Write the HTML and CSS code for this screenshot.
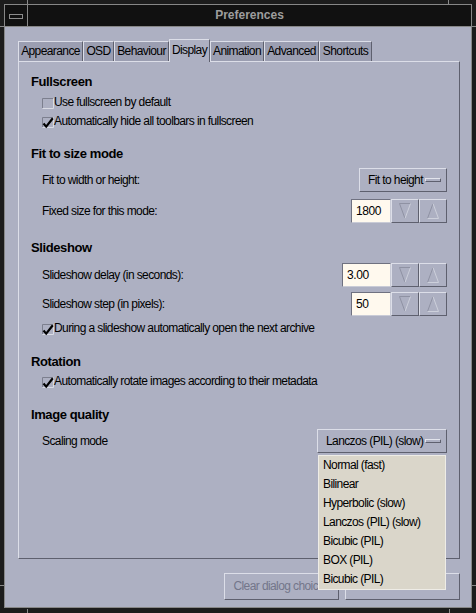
FILE: index.html
```html
<!DOCTYPE html>
<html>
<head>
<meta charset="utf-8">
<title>Preferences</title>
<link rel="stylesheet" href="styles.css">
</head>
<body>
<div class="window">
  <div class="titlebar">
    <div class="menu-btn"><span class="menu-glyph"></span></div>
    <div class="title">Preferences</div>
  </div>
  <div class="content">
    <div class="notebook">
      <div class="tabs">
        <div class="tab t-appearance">Appearance</div>
        <div class="tab t-osd">OSD</div>
        <div class="tab t-behaviour">Behaviour</div>
        <div class="tab t-display active">Display</div>
        <div class="tab t-animation">Animation</div>
        <div class="tab t-advanced">Advanced</div>
        <div class="tab t-shortcuts">Shortcuts</div>
      </div>
      <div class="panel">
        <div class="heading">Fullscreen</div>
        <div class="check-row mt2">
          <svg class="cb" width="12" height="12" viewBox="0 0 12 12"><path d="M0.5 10V0.5H11" fill="none" stroke="#7c7f8e"/><path d="M11.5 0.5V10.5H0.5" fill="none" stroke="#d9dbe4"/></svg>
          <span>Use fullscreen by default</span>
        </div>
        <div class="check-row">
          <svg class="cb" width="12" height="12" viewBox="0 0 12 12"><path d="M0.5 10V0.5H11" fill="none" stroke="#7c7f8e"/><path d="M11.5 0.5V10.5H0.5" fill="none" stroke="#d9dbe4"/><path d="M1.5 6.5L4.2 9.6L10.8 1.2" fill="none" stroke="#000" stroke-width="2.2"/></svg>
          <span>Automatically hide all toolbars in fullscreen</span>
        </div>

        <div class="heading mt14">Fit to size mode</div>
        <div class="ctl-row mt5">
          <span>Fit to width or height:</span>
          <div class="optmenu w-fit"><span>Fit to height</span><span class="ind"></span></div>
        </div>
        <div class="ctl-row mt7">
          <span>Fixed size for this mode:</span>
          <div class="spin">
            <div class="entry w40">1800</div>
            <div class="arrow"><svg width="14" height="18" viewBox="0 0 14 18"><path d="M1.5 1.5H12.5" stroke="#8f92a3" fill="none"/><path d="M1.5 1.5L7 16.5" stroke="#8f92a3" fill="none"/><path d="M12.5 1.5L7 16.5" stroke="#cdd0db" fill="none"/></svg></div>
            <div class="arrow"><svg width="14" height="18" viewBox="0 0 14 18"><path d="M7 1.5L1.5 16.5" stroke="#8f92a3" fill="none"/><path d="M7 1.5L12.5 16.5M1.5 16.5H12.5" stroke="#cdd0db" fill="none"/></svg></div>
          </div>
        </div>

        <div class="heading mt16">Slideshow</div>
        <div class="ctl-row mt6">
          <span>Slideshow delay (in seconds):</span>
          <div class="spin">
            <div class="entry w49">3.00</div>
            <div class="arrow"><svg width="14" height="18" viewBox="0 0 14 18"><path d="M1.5 1.5H12.5" stroke="#8f92a3" fill="none"/><path d="M1.5 1.5L7 16.5" stroke="#8f92a3" fill="none"/><path d="M12.5 1.5L7 16.5" stroke="#cdd0db" fill="none"/></svg></div>
            <div class="arrow"><svg width="14" height="18" viewBox="0 0 14 18"><path d="M7 1.5L1.5 16.5" stroke="#8f92a3" fill="none"/><path d="M7 1.5L12.5 16.5M1.5 16.5H12.5" stroke="#cdd0db" fill="none"/></svg></div>
          </div>
        </div>
        <div class="ctl-row mt5">
          <span>Slideshow step (in pixels):</span>
          <div class="spin">
            <div class="entry w40">50</div>
            <div class="arrow"><svg width="14" height="18" viewBox="0 0 14 18"><path d="M1.5 1.5H12.5" stroke="#8f92a3" fill="none"/><path d="M1.5 1.5L7 16.5" stroke="#8f92a3" fill="none"/><path d="M12.5 1.5L7 16.5" stroke="#cdd0db" fill="none"/></svg></div>
            <div class="arrow"><svg width="14" height="18" viewBox="0 0 14 18"><path d="M7 1.5L1.5 16.5" stroke="#8f92a3" fill="none"/><path d="M7 1.5L12.5 16.5M1.5 16.5H12.5" stroke="#cdd0db" fill="none"/></svg></div>
          </div>
        </div>
        <div class="check-row mt3">
          <svg class="cb" width="12" height="12" viewBox="0 0 12 12"><path d="M0.5 10V0.5H11" fill="none" stroke="#7c7f8e"/><path d="M11.5 0.5V10.5H0.5" fill="none" stroke="#d9dbe4"/><path d="M1.5 6.5L4.2 9.6L10.8 1.2" fill="none" stroke="#000" stroke-width="2.2"/></svg>
          <span>During a slideshow automatically open the next archive</span>
        </div>

        <div class="heading mt15">Rotation</div>
        <div class="check-row mt1">
          <svg class="cb" width="12" height="12" viewBox="0 0 12 12"><path d="M0.5 10V0.5H11" fill="none" stroke="#7c7f8e"/><path d="M11.5 0.5V10.5H0.5" fill="none" stroke="#d9dbe4"/><path d="M1.5 6.5L4.2 9.6L10.8 1.2" fill="none" stroke="#000" stroke-width="2.2"/></svg>
          <span>Automatically rotate images according to their metadata</span>
        </div>

        <div class="heading mt15">Image quality</div>
        <div class="ctl-row mt5">
          <span>Scaling mode</span>
          <div class="optmenu w-scale"><span>Lanczos (PIL) (slow)</span><span class="ind"></span></div>
        </div>
      </div>
    </div>
    <div class="buttons">
      <div class="btn insensitive">Clear dialog choices</div>
      <div class="btn">Close</div>
    </div>
    <div class="popup">
      <div class="item">Normal (fast)</div>
      <div class="item">Bilinear</div>
      <div class="item">Hyperbolic (slow)</div>
      <div class="item">Lanczos (PIL) (slow)</div>
      <div class="item">Bicubic (PIL)</div>
      <div class="item">BOX (PIL)</div>
      <div class="item">Bicubic (PIL)</div>
    </div>
  </div>
</div>
<span class="tick tv t-top-l"></span>
<span class="tick tv t-top-r"></span>
<span class="tick tv t-bot-l"></span>
<span class="tick tv t-bot-r"></span>
<span class="tick th t-left-t"></span>
<span class="tick th t-left-b"></span>
<span class="tick th t-right-t"></span>
<span class="tick th t-right-b"></span>
</body>
</html>
```

FILE: styles.css
```css
* { box-sizing: border-box; }
html, body { margin: 0; padding: 0; }
body {
  width: 476px;
  height: 613px;
  background: #1c1c1c;
  font-family: "Liberation Sans", Arial, sans-serif;
  font-size: 12px;
  color: #000;
  overflow: hidden;
  position: relative;
}
.window {
  margin: 4px 4px 5px 4px;
  height: 604px;
  border: 1px solid #878787;
  display: flex;
  flex-direction: column;
}
.titlebar {
  height: 22px;
  background: #111;
  border-bottom: 1px solid #878787;
  display: flex;
}
.menu-btn {
  width: 23px;
  border-right: 1px solid #878787;
  display: flex;
  align-items: center;
  justify-content: center;
}
.menu-glyph {
  width: 14px;
  height: 5px;
  border: 1px solid #8c8c8c;
  margin-top: 1px;
}
.title {
  flex: 1;
  text-align: center;
  font-weight: bold;
  color: #9d9d9d;
  line-height: 21px;
}
.content {
  flex: 1;
  background: #adb0c2;
  position: relative;
  padding: 12px 11px 0 13px;
  display: flex;
  flex-direction: column;
}
.notebook { display: flex; flex-direction: column; }
.tabs {
  display: flex;
  align-items: flex-end;
  height: 22px;
}
.tab {
  height: 20px;
  background: #9b9eb1;
  border-top: 1px solid #dcdee8;
  border-left: 1px solid #dcdee8;
  border-right: 1px solid #5e606e;
  line-height: 19px;
  text-align: center;
  letter-spacing: -0.6px;
  white-space: nowrap;
}
.tab.active {
  height: 23px;
  margin-bottom: -1px;
  background: #adb0c2;
  position: relative;
  z-index: 1;
  line-height: 20px;
}
.t-appearance { width: 65px; }
.t-osd { width: 31px; }
.t-behaviour { width: 55px; }
.t-display { width: 41px; }
.t-animation { width: 54px; }
.t-advanced { width: 55px; }
.t-shortcuts { width: 53px; }

.panel {
  height: 498px;
  border-top: 1px solid #dcdee8;
  border-left: 1px solid #dcdee8;
  border-right: 1px solid #5e606e;
  border-bottom: 1px solid #5e606e;
  padding: 11px 12px 0 12px;
}
.heading {
  font-size: 13px;
  font-weight: bold;
  line-height: 18px;
  letter-spacing: -0.4px;
  height: 18px;
}
.check-row {
  height: 19px;
  line-height: 19px;
  display: flex;
  align-items: center;
  padding-left: 11px;
  letter-spacing: -0.6px;
  white-space: nowrap;
}
.cb { flex: none; margin-top: 2px; margin-right: 0; }
.ctl-row {
  height: 24px;
  display: flex;
  align-items: center;
  justify-content: space-between;
  padding-left: 11px;
  letter-spacing: -0.6px;
  white-space: nowrap;
}
.mt1 { margin-top: 1px; }
.mt2 { margin-top: 2px; }
.mt3 { margin-top: 3px; }
.mt5 { margin-top: 5px; }
.mt6 { margin-top: 6px; }
.mt7 { margin-top: 7px; }
.mt14 { margin-top: 14px; }
.mt15 { margin-top: 15px; }
.mt16 { margin-top: 16px; }

.optmenu {
  height: 24px;
  border-top: 1px solid #dcdee8;
  border-left: 1px solid #dcdee8;
  border-right: 1px solid #5e606e;
  border-bottom: 1px solid #5e606e;
  display: flex;
  align-items: center;
  justify-content: space-between;
  padding: 0 5px 0 8px;
}
.w-fit { width: 88px; }
.w-scale { width: 130px; }
.ind {
  width: 16px;
  height: 4px;
  border-top: 1px solid #e2e4ec;
  border-left: 1px solid #e2e4ec;
  border-right: 1px solid #5e606e;
  border-bottom: 1px solid #5e606e;
  margin-left: 2px;
}
.spin { display: flex; }
.entry {
  height: 24px;
  background: #fff9ee;
  border-top: 1px solid #6f7180;
  border-left: 1px solid #6f7180;
  border-right: 1px solid #c9cbd6;
  border-bottom: 1px solid #c9cbd6;
  line-height: 22px;
  padding-left: 4px;
  letter-spacing: -0.4px;
}
.w40 { width: 40px; }
.w49 { width: 49px; }
.arrow {
  width: 28px;
  height: 24px;
  border-top: 1px solid #dcdee8;
  border-left: 1px solid #dcdee8;
  border-right: 1px solid #5e606e;
  border-bottom: 1px solid #5e606e;
  display: flex;
  align-items: center;
  justify-content: center;
}
.buttons {
  display: flex;
  justify-content: flex-end;
  gap: 6px;
  margin-top: 14px;
}
.btn {
  width: 115px;
  height: 27px;
  border-top: 1px solid #dcdee8;
  border-left: 1px solid #dcdee8;
  border-right: 1px solid #5e606e;
  border-bottom: 1px solid #5e606e;
  text-align: center;
  line-height: 25px;
  letter-spacing: -0.6px;
  white-space: nowrap;
  overflow: hidden;
}
.btn.insensitive { color: #73768a; }
.popup {
  position: absolute;
  left: 313px;
  top: 428px;
  width: 128px;
  height: 135px;
  background: #dad6ca;
  border: 1px solid #eeece6;
  z-index: 5;
}
.popup .item {
  height: 19px;
  line-height: 19px;
  padding-left: 4px;
  letter-spacing: -0.6px;
  white-space: nowrap;
}
.tick { position: absolute; background: #8a8a8a; }
.tv { width: 1px; height: 4px; }
.th { width: 4px; height: 1px; }
.t-top-l { left: 27px; top: 0; }
.t-top-r { left: 448px; top: 0; }
.t-bot-l { left: 27px; top: 609px; }
.t-bot-r { left: 449px; top: 609px; }
.t-left-t { left: 0; top: 26px; }
.t-left-b { left: 0; top: 585px; }
.t-right-t { left: 472px; top: 26px; }
.t-right-b { left: 472px; top: 585px; }
```
